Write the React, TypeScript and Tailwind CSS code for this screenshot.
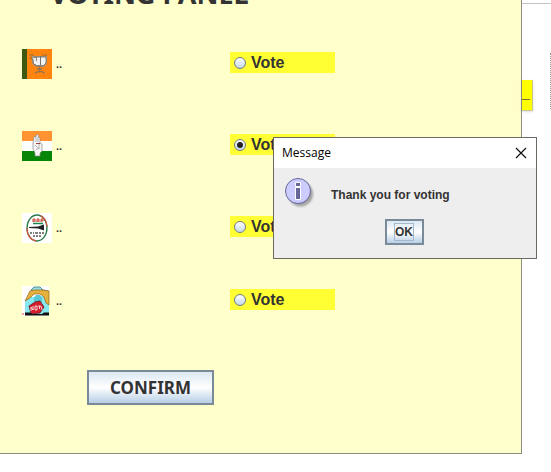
import { useState } from "react";
import type { ReactNode } from "react";

function LotusIcon() {
  return (
    <svg viewBox="0 0 30 30" className="h-[30px] w-[30px] shrink-0" aria-hidden="true">
      <rect width="30" height="30" fill="#ff8410" />
      <rect width="5" height="30" fill="#3e5a10" />
      <path d="M7 6h5M7 9h3M20 6h5M23 9h2M10 6v5M24 6v4" stroke="#a8702c" strokeWidth="1" fill="none" />
      <path d="M10 7h15v6q-1 5-5 5h-5q-4-1-5-5z" fill="#a9998a" />
      <path d="M11 9h3v6h-2zM14 8h4v8h-4zM19 8h4v8h-4zM23 9h1v5h-1z" fill="#f2f2f2" />
      <path d="M11 10v4l3 3h7l3-3v-5M14.500 8v4M18.500 7v9M12 8h12" stroke="#6d6761" strokeWidth=".8" fill="none" />
      <path d="M17.500 17v6M13 24.500q2-2.500 4.500-1.500q3-1 5 1.500M15 20h5" stroke="#98714e" strokeWidth="1.300" fill="none" />
    </svg>
  );
}

function HandIcon() {
  return (
    <svg viewBox="0 0 30 30" className="h-[30px] w-[30px] shrink-0" aria-hidden="true">
      <rect width="30" height="30" fill="#fff" />
      <rect width="30" height="10" fill="#ff9331" />
      <rect y="20" width="30" height="10" fill="#078507" />
      <path d="M13 25v-3l-2-4v-6l1-6 1-1 1 1V4.500l1.500-1 1 1V6l1.500 1v5l2 1v7l-2 2v3z" fill="#f6f6f6" stroke="#888" strokeWidth=".7" />
      <path d="M14 6v5M16 6v5M13 14l3 3M17 13v5M14 19l3-2" stroke="#888" strokeWidth=".6" fill="none" />
      <path d="M14 12.500h4" stroke="#944" strokeWidth="1" />
    </svg>
  );
}

function BroomIcon() {
  return (
    <svg viewBox="0 0 30 30" className="h-[30px] w-[30px] shrink-0" aria-hidden="true">
      <rect width="30" height="30" fill="#fff" />
      <ellipse cx="15" cy="15" rx="10" ry="13" fill="#fff" stroke="#287a48" strokeWidth="1.300" />
      <path d="M5 15q0 11 9 13M18 2.500q6 2 7 11" stroke="#d5533b" strokeWidth="1.300" fill="none" />
      <path d="M11 9V6h2v3M11 8h2M15 9V6h2v3M15 8h2M19 9V6h2v2h-2" stroke="#c6402e" strokeWidth="1" fill="none" />
      <path d="M11 10.500h10" stroke="#16864a" strokeWidth="1.500" />
      <path d="M7 14l9-.5 6-2v6l-6-2-9-.5z" fill="#222" />
      <path d="M8 20h2M11 20h1M13 20h3M17 20h2M20 20h2M11 23h2M14 23h2M17 23h2" stroke="#555" strokeWidth="1.400" />
    </svg>
  );
}

function BallotIcon() {
  return (
    <svg viewBox="0 0 30 30" className="h-[30px] w-[30px] shrink-0" aria-hidden="true">
      <rect width="27" height="30" fill="#fff" />
      <path d="M3 14l6-3 15-1h3v18H3z" fill="#86e8ee" />
      <path d="M9 4l3-3h6l3 3 5 1v4z" fill="#9dd" stroke="#357b80" strokeWidth=".8" />
      <path d="M4 13l4-8 4-1h9l6 1v14l-3-2-2-6-4-3h-6l-4 4-5 3z" fill="#e6b03c" stroke="#8f671e" strokeWidth=".7" />
      <path d="M12 12l2-3h4l2 3v4h-8z" fill="#58c9d4" />
      <path d="M7 20l6-4 5-1 4 6-4 6-9 1z" fill="#d51d2b" stroke="#551015" strokeWidth=".7" />
      <path d="M9 25v-4l2 3v-4M13 20h2v4h-2zM16 20h3M17.500 20v3M20 24l-1-4" stroke="#fff" strokeWidth=".8" fill="none" />
      <path d="M3 26.500h5l2 1.500h10l2-1.500h5V29.500H3z" fill="#111" />
      <circle cx="1" cy="28" r=".8" fill="#e22" />
    </svg>
  );
}

function InfoIcon() {
  return (
    <svg viewBox="0 0 32 32" className="h-8 w-8 shrink-0" aria-hidden="true">
      <defs>
        <filter id="info-shadow" x="-20%" y="-20%" width="140%" height="140%">
          <feGaussianBlur stdDeviation="1" />
        </filter>
      </defs>
      <circle cx="15.500" cy="16" r="12.500" fill="#777" opacity=".65" filter="url(#info-shadow)" />
      <circle cx="13" cy="13" r="12.500" fill="#ccccff" stroke="#666699" />
      <path d="M10.500 4.500h5v4h-5zM10.500 9.500h5v12h-5z" fill="#666699" stroke="#fff" />
    </svg>
  );
}

interface RowProps {
  id: string;
  icon: ReactNode;
  checked: boolean;
  onSelect: (id: string) => void;
}

function CandidateRow({ id, icon, checked, onSelect }: RowProps) {
  return (
    <div className="flex items-start">
      <div className="flex w-[208px] items-center gap-1">
        {icon}
        <span className="text-[11px] leading-4 font-bold">..</span>
      </div>
      <label className="mt-[3px] flex h-[21px] w-[105px] items-center gap-[5px] bg-[#ffff33] pl-1 text-base leading-5 font-bold">
        <input
          type="radio"
          name="candidate"
          value={id}
          checked={checked}
          onChange={() => onSelect(id)}
          className="grid h-3 w-3 appearance-none place-items-center rounded-full border border-[#707b88] bg-linear-to-b from-white to-[#c5d8e9] before:h-1.5 before:w-1.5 before:rounded-full checked:before:bg-[#222]"
        />
        Vote
      </label>
    </div>
  );
}

export default function App() {
  const [selected, setSelected] = useState("hand");
  const [open, setOpen] = useState(true);
  const row = (id: string, icon: ReactNode) => (
    <CandidateRow id={id} icon={icon} checked={selected === id} onSelect={setSelected} />
  );

  return (
    <div className="relative flex items-start overflow-hidden bg-white font-['Liberation_Sans',Arial,sans-serif] text-[#333333]">
      <main className="min-w-0 flex-1 border-r border-b border-[#8c8c83] bg-[#ffffcc] pb-12 pl-[22px]">
        <h1 className="-mt-6 ml-7 h-9 font-['Noto_Sans',sans-serif] text-[27px] leading-9 font-bold whitespace-nowrap">
          VOTING PANEL
        </h1>
        <form onSubmit={(e) => { e.preventDefault(); setOpen(true); }}>
          <div className="flex flex-col gap-[52px] pt-[37px]">
            {row("lotus", <LotusIcon />)}
            {row("hand", <HandIcon />)}
            {row("broom", <BroomIcon />)}
          </div>
          <div className="pt-[43px]">{row("nota", <BallotIcon />)}</div>
          <button
            type="submit"
            className="mt-[54px] ml-[65px] block h-[35px] w-[127px] border-2 border-[#7a8a99] bg-linear-to-b from-[#dce8f3] via-white to-[#b8cfe5] pt-px font-['Noto_Sans',sans-serif] text-[17px] leading-6 font-bold"
          >
            CONFIRM
          </button>
        </form>
      </main>
      <aside className="flex w-[29px] justify-between pt-[3px]">
        <div className="flex w-full items-start justify-between border-t border-[#c4c4c4]">
          <div className="mt-[76px] flex h-[31px] w-[11px] items-center border-r border-b border-[#c7c78b] bg-[#ffff00] shadow-sm">
            <div className="mt-2 h-px w-2 bg-[#77772a]" />
          </div>
          <div className="mt-[49px] h-14 border-r border-dotted border-[#999999]" />
        </div>
      </aside>

      {open && (
        <section
          role="dialog"
          aria-labelledby="dialog-title"
          className="absolute top-[137px] left-[273px] w-[264px] border border-[#6a6a62] bg-[#eeeeee]"
        >
          <header className="flex h-[30px] items-center justify-between bg-white px-2 text-black">
            <h2 id="dialog-title" className="font-['Open_Sans',sans-serif] text-xs">Message</h2>
            <button type="button" aria-label="Close" onClick={() => setOpen(false)} className="p-px">
              <svg viewBox="0 0 12 12" className="h-3 w-3" aria-hidden="true">
                <path d="M1 1l10 10M11 1L1 11" stroke="#111" strokeWidth="1.200" />
              </svg>
            </button>
          </header>
          <div className="flex items-start gap-[14px] pt-[10px] pl-[11px]">
            <InfoIcon />
            <p className="pt-[9px] text-xs leading-4 font-bold">Thank you for voting</p>
          </div>
          <div className="flex justify-center pt-[9px] pr-0.5 pb-[13px]">
            <button
              type="button"
              onClick={() => setOpen(false)}
              className="flex h-[26px] w-[39px] items-center justify-center border-2 border-[#7a8a99] bg-linear-to-b from-[#dce8f3] via-white to-[#b8cfe5] text-xs leading-4 font-bold"
            >
              <span className="border border-[#a3b8cc]">OK</span>
            </button>
          </div>
        </section>
      )}
    </div>
  );
}
